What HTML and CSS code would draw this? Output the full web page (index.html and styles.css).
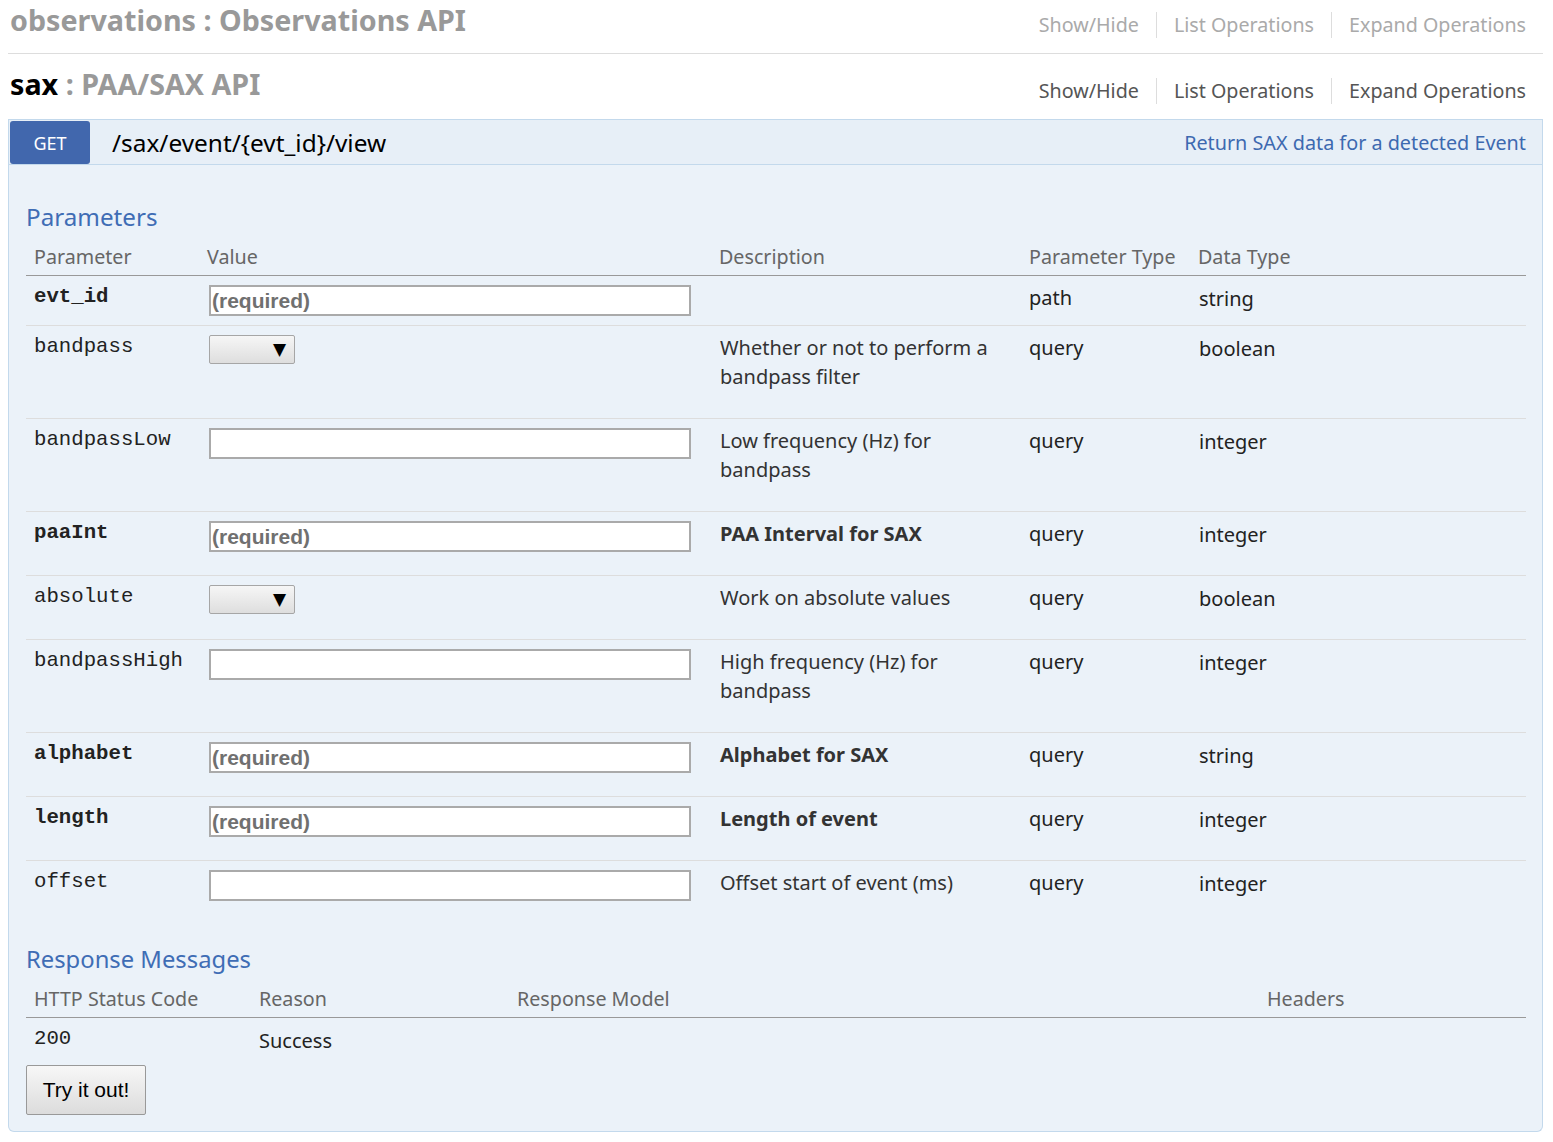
FILE: index.html
```html
<!DOCTYPE html>
<html lang="en">
<head>
<meta charset="utf-8">
<title>Observations API</title>
<link rel="stylesheet" href="styles.css">
</head>
<body>
<div class="resource">
  <header class="res-head res-head--top">
    <h2 class="res-title res-title--muted">observations : Observations API</h2>
    <ul class="ops-links ops-links--muted">
      <li><a>Show/Hide</a></li>
      <li><a>List Operations</a></li>
      <li><a>Expand Operations</a></li>
    </ul>
  </header>
</div>
<div class="resource">
  <header class="res-head res-head--active">
    <h2 class="res-title"><span class="res-name">sax</span> : PAA/SAX API</h2>
    <ul class="ops-links">
      <li><a>Show/Hide</a></li>
      <li><a>List Operations</a></li>
      <li><a>Expand Operations</a></li>
    </ul>
  </header>
  <div class="operation">
    <div class="op-heading">
      <span class="method">GET</span>
      <span class="op-path">/sax/event/{evt_id}/view</span>
      <span class="op-summary">Return SAX data for a detected Event</span>
    </div>
    <div class="op-content">
      <h4 class="section-title">Parameters</h4>
      <table class="grid params">
        <colgroup>
          <col class="c-name"><col class="c-value"><col class="c-desc"><col class="c-ptype"><col class="c-dtype">
        </colgroup>
        <thead>
          <tr><th>Parameter</th><th>Value</th><th>Description</th><th>Parameter Type</th><th>Data Type</th></tr>
        </thead>
        <tbody>
          <tr>
            <td class="pname req">evt_id</td>
            <td><input class="field" placeholder="(required)"></td>
            <td class="txt"></td>
            <td class="txt">path</td>
            <td class="txt dtype">string</td>
          </tr>
          <tr>
            <td class="pname">bandpass</td>
            <td><div class="select"><span class="arrow">▼</span></div></td>
            <td class="txt"><p class="desc">Whether or not to perform a bandpass filter</p></td>
            <td class="txt">query</td>
            <td class="txt dtype">boolean</td>
          </tr>
          <tr>
            <td class="pname">bandpassLow</td>
            <td><input class="field"></td>
            <td class="txt"><p class="desc">Low frequency (Hz) for bandpass</p></td>
            <td class="txt">query</td>
            <td class="txt dtype">integer</td>
          </tr>
          <tr>
            <td class="pname req">paaInt</td>
            <td><input class="field" placeholder="(required)"></td>
            <td class="txt"><p class="desc strong">PAA Interval for SAX</p></td>
            <td class="txt">query</td>
            <td class="txt dtype">integer</td>
          </tr>
          <tr>
            <td class="pname">absolute</td>
            <td><div class="select"><span class="arrow">▼</span></div></td>
            <td class="txt"><p class="desc">Work on absolute values</p></td>
            <td class="txt">query</td>
            <td class="txt dtype">boolean</td>
          </tr>
          <tr>
            <td class="pname">bandpassHigh</td>
            <td><input class="field"></td>
            <td class="txt"><p class="desc">High frequency (Hz) for bandpass</p></td>
            <td class="txt">query</td>
            <td class="txt dtype">integer</td>
          </tr>
          <tr>
            <td class="pname req">alphabet</td>
            <td><input class="field" placeholder="(required)"></td>
            <td class="txt"><p class="desc strong">Alphabet for SAX</p></td>
            <td class="txt">query</td>
            <td class="txt dtype">string</td>
          </tr>
          <tr>
            <td class="pname req">length</td>
            <td><input class="field" placeholder="(required)"></td>
            <td class="txt"><p class="desc strong">Length of event</p></td>
            <td class="txt">query</td>
            <td class="txt dtype">integer</td>
          </tr>
          <tr>
            <td class="pname">offset</td>
            <td><input class="field"></td>
            <td class="txt"><p class="desc">Offset start of event (ms)</p></td>
            <td class="txt">query</td>
            <td class="txt dtype">integer</td>
          </tr>
        </tbody>
      </table>
      <h4 class="section-title section-title--gap">Response Messages</h4>
      <table class="grid responses">
        <colgroup>
          <col class="c-code"><col class="c-reason"><col class="c-model"><col class="c-headers">
        </colgroup>
        <thead>
          <tr><th>HTTP Status Code</th><th>Reason</th><th>Response Model</th><th>Headers</th></tr>
        </thead>
        <tbody>
          <tr><td class="pname code">200</td><td class="reason">Success</td><td></td><td></td></tr>
        </tbody>
      </table>
      <button class="try-btn" type="button">Try it out!</button>
    </div>
  </div>
</div>
</body>
</html>
```
FILE: styles.css
```css
* { box-sizing: border-box; }

body {
  margin: 0 10px 0 8px;
  font-family: "Noto Sans", "Open Sans", sans-serif;
  font-size: 20px;
  color: #333;
  background: #fff;
}

.res-head {
  display: flex;
  justify-content: space-between;
  align-items: flex-start;
}

.res-head--top {
  padding: 0 0 13px 2px;
  border-bottom: 1px solid #ddd;
}

.res-head--active {
  padding: 10px 0 15px 2px;
}

.res-title {
  margin: 0;
  font-size: 28.7px;
  line-height: 40px;
  font-weight: bold;
  color: #999;
}

.res-name { color: #000; }

.ops-links {
  display: flex;
  list-style: none;
  margin: 14px 0 0;
  padding: 0;
}

.res-head--top .ops-links { margin-top: 12px; }

.ops-links li + li { border-left: 1px solid #ddd; }

.ops-links a {
  display: block;
  padding: 0 17px;
  line-height: 26px;
  font-size: 19.7px;
  color: #555;
}

.ops-links li:first-child a { padding-left: 0; }

.ops-links--muted a { color: #aaa; }

.operation { margin: 0; }

.op-heading {
  display: flex;
  align-items: center;
  height: 46px;
  padding: 0 16px 0 1px;
  background: #e7eff7;
  border: 1px solid #c3d9ec;
}

.method {
  display: flex;
  align-items: center;
  justify-content: center;
  width: 80px;
  height: 43px;
  margin-top: 1px;
  background: #4167ad;
  color: #fff;
  font-size: 18px;
  border-radius: 3px;
}

.op-path {
  margin-left: 22px;
  font-size: 24.4px;
  color: #000;
}

.op-summary {
  margin-left: auto;
  font-size: 19.8px;
  color: #3d69b0;
}

.op-content {
  padding: 35px 16px 16px 17px;
  background: #ebf2f9;
  border: 1px solid #c3d9ec;
  border-top: 0;
  border-radius: 0 0 6px 6px;
}

.section-title {
  margin: 0 0 8px;
  font-size: 24.2px;
  line-height: 34px;
  font-weight: normal;
  color: #3f6db5;
}

.section-title--gap { margin-top: 18px; font-size: 23.8px; }

.grid {
  width: 100%;
  border-collapse: collapse;
  table-layout: fixed;
}

.grid th {
  text-align: left;
  font-weight: normal;
  color: #666;
  padding: 0 8px 4px;
  line-height: 29px;
  border-bottom: 1px solid #999;
  font-size: 19.7px;
}

.grid td {
  vertical-align: top;
  padding: 9px 8px;
  line-height: 29px;
  border-bottom: 1px solid #ddd;
  color: #222;
}

.grid td.txt { padding: 7px 8px 11px; }

.grid td.dtype { padding-top: 8px; padding-left: 9px; }

.grid td.reason { padding-top: 8px; padding-bottom: 10px; }

.grid tbody tr:last-child td { border-bottom: 0; }

.c-name { width: 173px; }
.c-value { width: 512px; }
.c-desc { width: 310px; }
.c-ptype { width: 169px; }
.c-dtype { width: 336px; }

.c-code { width: 225px; }
.c-reason { width: 258px; }
.c-model { width: 750px; }
.c-headers { width: 267px; }

.pname {
  font-family: "Liberation Mono", "DejaVu Sans Mono", monospace;
  font-size: 20.7px;
  color: #000;
}

.grid td.pname { line-height: 24px; }

.pname.req { font-weight: bold; }

.field {
  display: block;
  width: 482px;
  height: 31px;
  margin: 0 0 0 2px;
  padding: 0 1px;
  border: 2px solid #aaa;
  background: #fff;
  font-family: "Liberation Sans", Arial, sans-serif;
  font-size: 21px;
  font-weight: bold;
  color: #666;
}

.field::placeholder { color: #707070; opacity: 1; }

.select {
  display: flex;
  align-items: center;
  justify-content: flex-end;
  width: 86px;
  height: 29px;
  margin-left: 2px;
  padding-right: 8px;
  border: 1px solid #a6a6a6;
  border-radius: 2px;
  background: linear-gradient(#f6f6f6, #dedede);
}

.arrow {
  font-family: "DejaVu Sans", sans-serif;
  font-size: 17px;
  line-height: 1;
  color: #000;
}

.desc {
  margin: 0 0 16px 1px;
  color: #333;
}

.desc.strong { font-weight: bold; }

.try-btn {
  display: block;
  width: 120px;
  height: 50px;
  padding: 0;
  border: 1px solid #999;
  border-radius: 2px;
  background: linear-gradient(#f7f7f7, #dcdcdc);
  font-family: "Liberation Sans", Arial, sans-serif;
  font-size: 21px;
  color: #000;
}
```
